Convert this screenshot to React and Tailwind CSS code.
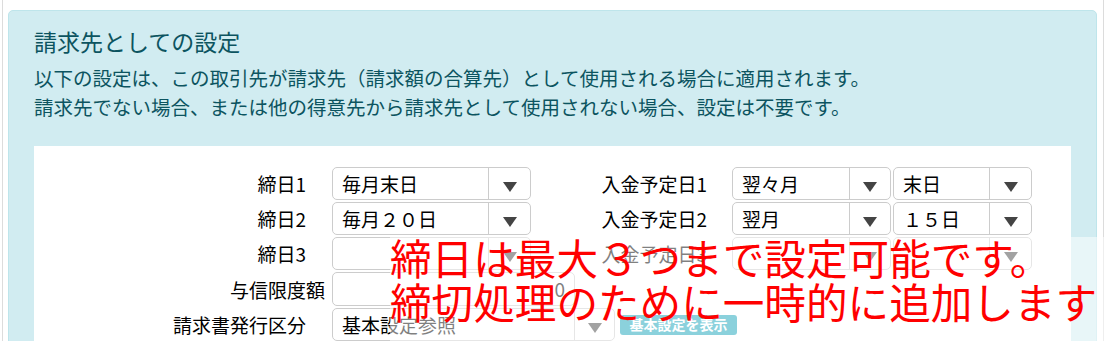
const FONT = { fontFamily: '"Noto Sans CJK JP", "Noto Sans", sans-serif' };

function Arrow() {
  return <span className="mt-[7px] h-0 w-0 border-x-[7.5px] border-t-[10px] border-x-transparent border-t-[#444]" />;
}

// bootstrap-ish select: text area + arrow well
function Select({ width, arrowW = 42, value = '', className = '' }) {
  return (
    <div
      className={`flex h-[33px] shrink-0 rounded-[5px] border border-[#ccc] bg-white text-[19px] text-black ${className}`}
      style={{ width }}
    >
      <div className="flex flex-1 items-center whitespace-nowrap pl-[9px] leading-none">{value}</div>
      <div className="flex items-center justify-center border-l border-[#ccc]" style={{ width: arrowW }}>
        <Arrow />
      </div>
    </div>
  );
}

function Label({ children, pr = 'pr-[26px]', w = 'w-[298px]' }) {
  return <div className={`${w} ${pr} shrink-0 text-right text-[19px] leading-none text-black`}>{children}</div>;
}

export default function App() {
  return (
    <div className="relative h-[341px] w-[1112px] overflow-hidden bg-white" style={FONT}>
      <div className="ml-[2px] h-full w-[1102px] border-x border-[#dcdcdc] pl-[5px] pr-[6px] pt-[10px]">
        <div className="rounded-[5px] border border-[#bee5eb] bg-[#d1ecf1] px-[25px] pt-[16px] text-[#0c5460]">
          <h4 className="text-[23px] leading-[28px]">請求先としての設定</h4>
          <p className="mt-[8px] text-[19.5px] leading-[29px]">
            以下の設定は、この取引先が請求先（請求額の合算先）として使用される場合に適用されます。
            <br />
            請求先でない場合、または他の得意先から請求先として使用されない場合、設定は不要です。
          </p>

          <div className="mt-[25px] h-[200px] bg-white pt-[21px]">
            {/* 締日 / 入金予定日 */}
            <div className="flex items-center">
              <Label>締日1</Label>
              <Select width={199} value="毎月末日" />
              <Label w="w-[201px]" pr="pr-[25px]">入金予定日1</Label>
              <Select width={159} arrowW={41} value="翌々月" />
              <Select width={139} value="末日" className="ml-[2px]" />
            </div>
            <div className="mt-[2px] flex items-center">
              <Label>締日2</Label>
              <Select width={199} value="毎月２０日" />
              <Label w="w-[201px]" pr="pr-[25px]">入金予定日2</Label>
              <Select width={159} arrowW={41} value="翌月" />
              <Select width={139} value="１５日" className="ml-[2px]" />
            </div>
            <div className="mt-[2px] flex items-center">
              <Label>締日3</Label>
              <Select width={199} />
              <Label w="w-[201px]" pr="pr-[25px]">入金予定日3</Label>
              <Select width={159} arrowW={41} />
              <Select width={139} className="ml-[2px]" />
            </div>

            {/* 与信限度額 */}
            <div className="mt-[2px] flex items-center">
              <Label pr="pr-[7px]">与信限度額</Label>
              <div className="flex h-[34px] w-[243px] items-center justify-end rounded-[5px] border border-[#ccc] pr-[9px] text-[19px] text-black">
                0
              </div>
            </div>

            {/* 請求書発行区分 */}
            <div className="mt-[2px] flex items-center">
              <Label>請求書発行区分</Label>
              <Select width={283} arrowW={40} value="基本設定参照" />
              <span className="ml-[5px] flex h-[20px] w-[117px] items-center justify-center rounded-[3px] bg-[#17a2b8] text-[14px] font-bold text-white">
                基本設定を表示
              </span>
            </div>
          </div>
        </div>
      </div>

      {/* annotation laid over the form */}
      <div className="absolute bottom-0 left-[390px] right-0 top-[237px] bg-white/50">
        <div className="-mt-[2px] whitespace-nowrap text-[41.6px] leading-[44px] text-[#ff0000]">
          締日は最大３つまで設定可能です。
          <br />
          締切処理のために一時的に追加します
        </div>
      </div>
    </div>
  );
}
